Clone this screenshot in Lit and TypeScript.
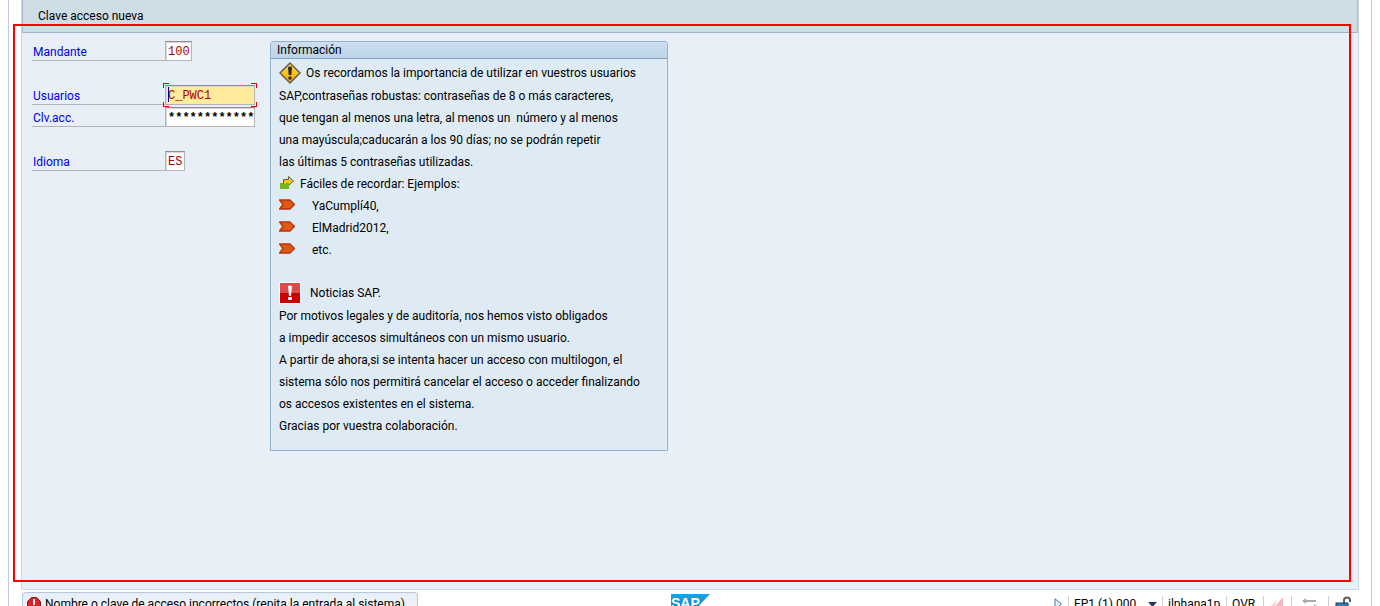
import { LitElement, html, css, nothing } from "lit";
import { customElement } from "lit/decorators.js";

type IconName = "warning" | "transfer" | "bullet" | "alert";

interface InfoLine {
  icon?: IconName;
  text: string;
}

const INFO_LINES: InfoLine[] = [
  { icon: "warning", text: "Os recordamos la importancia de utilizar en vuestros usuarios" },
  { text: "SAP,contraseñas robustas: contraseñas de 8 o más caracteres," },
  { text: "que tengan al menos una letra, al menos un  número y al menos" },
  { text: "una mayúscula;caducarán a los 90 días; no se podrán repetir" },
  { text: "las últimas 5 contraseñas utilizadas." },
  { icon: "transfer", text: "Fáciles de recordar: Ejemplos:" },
  { icon: "bullet", text: "YaCumplí40," },
  { icon: "bullet", text: "ElMadrid2012," },
  { icon: "bullet", text: "etc." },
  { text: "" },
  { icon: "alert", text: "Noticias SAP." },
  { text: "Por motivos legales y de auditoría, nos hemos visto obligados" },
  { text: "a impedir accesos simultáneos con un mismo usuario." },
  { text: "A partir de ahora,si se intenta hacer un acceso con multilogon, el" },
  { text: "sistema sólo nos permitirá cancelar el acceso o acceder finalizando" },
  { text: "os accesos existentes en el sistema." },
  { text: "Gracias por vuestra colaboración." },
];

const ICONS = {
  warning: html`<svg width="22" height="22" viewBox="0 0 22 22" aria-hidden="true">
    <defs>
      <linearGradient id="amber" x1="0" y1="0" x2="0" y2="1">
        <stop offset="0" stop-color="#ffdc55" />
        <stop offset="0.5" stop-color="#fbc21c" />
        <stop offset="1" stop-color="#f5a800" />
      </linearGradient>
    </defs>
    <path d="M11 1 L21 11 L11 21 L1 11 Z" fill="url(#amber)" stroke="#66625a" stroke-width="1.6" stroke-linejoin="round" />
    <path d="M9 5.500 Q9 4.500 11 4.500 Q13 4.500 13 5.500 L12.300 13 H9.700 Z" fill="#2b2b2b" />
    <circle cx="11" cy="16" r="1.8" fill="#2b2b2b" />
  </svg>`,
  transfer: html`<svg width="16" height="16" viewBox="0 0 16 16" aria-hidden="true">
    <path d="M4.5 9.5 V4.5 H9.5 V1.5 L14.5 6 L9.5 10.5 V8.500 H7.500 V9.5 Z" fill="#ffc40d" stroke="#5a5a5a" />
    <path d="M1 8 H4 V9 H8 V8 H10 V14 H1 Z" fill="#76b51b" />
  </svg>`,
  bullet: html`<svg width="16" height="12" viewBox="0 0 16 12" aria-hidden="true">
    <path d="M0.500 1 H11 L15.500 5.500 L11 10 H0.500 L4 5.500 Z" fill="#dd5a14" stroke="#b83212" stroke-width="1.300" stroke-linejoin="round" />
  </svg>`,
  alert: html`<svg width="22" height="22" viewBox="0 0 22 22" aria-hidden="true">
    <rect width="22" height="22" fill="#ffffff" />
    <rect x="1" y="1" width="20" height="20" fill="#cc0000" />
    <rect x="1" y="1" width="20" height="10" fill="#dd4a4a" />
    <path d="M9 4 Q11 3 13 4 L12 14 H10 Z" fill="#ffffff" />
    <rect x="9" y="15" width="4" height="3" rx="1" fill="#ffffff" />
  </svg>`,
};

@customElement("login-info")
class LoginInfo extends LitElement {
  static styles = css`
    :host {
      display: block;
      width: 398px;
    }
    .group {
      box-sizing: border-box;
      border: 1px solid #93b1d0;
      border-radius: 3px 3px 0 0;
      background: #deebf4;
      padding-bottom: 14px;
    }
    .title {
      margin: 0;
      height: 16px;
      line-height: 16px;
      padding-left: 6px;
      border-bottom: 1px solid #7f9fc4;
      background: linear-gradient(#cddff0, #bdd3e8);
      font-size: 12px;
      font-weight: 400;
    }
    .lines {
      margin: 0;
      padding: 3px 0 0 8px;
      list-style: none;
    }
    .line {
      display: flex;
      align-items: center;
      height: 22px;
      white-space: pre;
    }
    .text {
      padding-top: 2px;
    }
    .warning + .text,
    .alert + .text {
      padding-top: 0;
    }
    .warning,
    .alert,
    .transfer,
    .bullet {
      display: flex;
      flex: none;
    }
    .warning {
      width: 27px;
    }
    .alert {
      width: 31px;
    }
    .transfer {
      width: 21px;
    }
    .bullet {
      width: 33px;
    }
  `;

  render() {
    return html`<section class="group">
      <h2 class="title">Información</h2>
      <ul class="lines">
        ${INFO_LINES.map(
          (line) => html`<li class="line">${line.icon ? html`<span class=${line.icon}>${ICONS[line.icon]}</span>` : nothing}<span class="text">${line.text}</span></li>`
        )}
      </ul>
    </section>`;
  }
}

@customElement("status-bar")
class StatusBar extends LitElement {
  static styles = css`
    :host {
      display: block;
      height: 16px;
      flex: none;
    }
    .bar {
      display: grid;
      grid-template-columns: 1fr auto 1fr;
      align-items: start;
      padding: 2px 13px 0 13px;
      height: 22px;
    }
    .message {
      display: flex;
      align-items: center;
      justify-self: start;
      box-sizing: border-box;
      height: 24px;
      gap: 4px;
      padding: 0 12px 0 4px;
      border: 1px solid #b6c7da;
      border-radius: 3px;
      background: linear-gradient(#e6eef6, #f6f9fc);
      white-space: nowrap;
    }
    .logo {
      display: block;
      margin-top: 2px;
    }
    .system {
      display: flex;
      justify-self: end;
      align-items: center;
      height: 24px;
      white-space: nowrap;
    }
    .cell {
      display: flex;
      align-items: center;
      box-sizing: border-box;
      height: 16px;
      padding: 0 5px;
      border-left: 1px solid #cfcfcf;
    }
    .session {
      width: 94px;
    }
    .server {
      width: 64px;
    }
    .mode {
      width: 37px;
    }
    .slot {
      width: 28px;
      padding: 0 7px;
    }
    .wide {
      width: 37px;
      padding: 0 9px;
    }
    .last {
      width: 30px;
      padding: 0 6px;
    }
    .plain {
      display: flex;
      flex: 1;
      align-items: center;
      justify-content: space-between;
      padding: 0;
      border: 0;
      background: none;
      color: inherit;
      font: inherit;
    }
    .expand {
      margin-right: 5px;
    }
  `;

  render() {
    return html`<footer class="bar">
      <div class="message" role="status">
        <svg width="14" height="14" viewBox="0 0 14 14" aria-hidden="true">
          <path d="M4.500 .5 H9.500 L13.500 4.500 V9.500 L9.500 13.500 H4.500 L.5 9.500 V4.500 Z" fill="#d8232a" stroke="#7c1a1e" />
          <path d="M6 2 H8 V8 H6 Z M6 10 H8 V12 H6 Z" fill="#fff" />
        </svg>
        <span>Nombre o clave de acceso incorrectos (repita la entrada al sistema)</span>
      </div>
      <svg class="logo" width="39" height="20" viewBox="0 0 39 20" role="img" aria-label="SAP">
        <defs>
          <linearGradient id="sap" x1="0" y1="0" x2="0" y2="1">
            <stop offset="0" stop-color="#12a8e8" />
            <stop offset="1" stop-color="#1b6fc0" />
          </linearGradient>
        </defs>
        <path d="M0 0 H39 L20 20 H0 Z" fill="url(#sap)" />
        <text x="0" y="14" font-family="Liberation Sans" font-size="14" font-weight="700" fill="#fff">SAP</text>
      </svg>
      <div class="system">
        <button class="plain expand" aria-label="Ampliar">
          <svg width="9" height="12" viewBox="0 0 9 12"><path d="M1 .8 L7.500 6 L1 11.200 Z" fill="#e5f1fa" stroke="#3f7fb0" /></svg>
        </button>
        <div class="cell session">
          <button class="plain">
            FP1 (1) 000
            <svg width="9" height="5" viewBox="0 0 9 5" aria-hidden="true"><path d="M0 0 H9 L4.500 5 Z" fill="#1f3864" /></svg>
          </button>
        </div>
        <div class="cell server">ilphana1p</div>
        <div class="cell mode">OVR</div>
        <div class="cell slot">
          <svg width="12" height="14" viewBox="0 0 12 14" aria-hidden="true">
            <path d="M0 14 L12 0 V14 Z" fill="#f1b9bf" />
            <path d="M0 9 L5 3 V8 L0 14 Z" fill="#f7dadd" />
          </svg>
        </div>
        <div class="cell wide">
          <svg width="18" height="12" viewBox="0 0 18 12" aria-hidden="true">
            <path d="M1 3 L5 0 V2 H15 V4 H5 V6 Z M17 9 L13 6 V8 H5 V10 H13 V12 Z" fill="#a9adb0" />
          </svg>
        </div>
        <div class="cell last">
          <svg width="17" height="17" viewBox="0 0 17 17" aria-hidden="true">
            <path d="M9 8 V4 Q9 1.500 12 1.500 Q15 1.500 15 4 V6" fill="none" stroke="#5d6063" stroke-width="2" />
            <rect x="1" y="7" width="12" height="9" fill="#2a7fb8" stroke="#1c3f5c" />
          </svg>
        </div>
      </div>
    </footer>`;
  }
}

@customElement("app-root")
class AppRoot extends LitElement {
  static styles = css`
    :host {
      display: block;
      position: relative;
      box-sizing: border-box;
      height: 100vh;
      overflow: hidden;
      padding: 0 8px;
      background: #ffffff;
      color: #000000;
      font: 12px/18px Roboto, "Open Sans", sans-serif;
    }
    .window {
      display: flex;
      flex-direction: column;
      box-sizing: border-box;
      height: 100%;
      border: 1px solid #c0ccdc;
      border-width: 0 1px;
    }
    .screen {
      display: flex;
      flex: 1;
      flex-direction: column;
      margin: 0 12px;
      border: 1px solid #cfd9e6;
      border-top: 0;
      background: #e8eff6;
    }
    .toolbar {
      box-sizing: border-box;
      height: 33px;
      padding: 7px 8px;
      border-right: 1px solid #a9b8cc;
      border-bottom: 1px solid #a0b4c8;
      border-left: 1px solid #a9b8cc;
      background: #cfdde7;
    }
    .tool {
      display: block;
      padding: 0 7px;
      border: 0;
      background: none;
      color: inherit;
      font: inherit;
    }
    .content {
      display: flex;
      align-items: flex-start;
      gap: 13px;
      padding: 8px 10px;
    }
    .form {
      display: grid;
      gap: 2px;
      width: 225px;
    }
    .row {
      display: flex;
      height: 20px;
    }
    .spaced {
      margin-top: 22px;
    }
    .label {
      box-sizing: border-box;
      width: 133px;
      padding: 2px 0 0 1px;
      border-bottom: 1px solid #b4b4b4;
      color: #0000f0;
    }
    .field {
      box-sizing: border-box;
      height: 20px;
      margin: 0;
      padding: 2px 0 0 2px;
      border: 1px solid #b4b4b4;
      border-top-color: #8c8c8c;
      border-radius: 0;
      outline: 0;
      background: #ffffff;
      box-shadow: inset 1px 1px 0 #d8d8d8;
      color: #b00000;
      font: 12px/16px "Liberation Mono", monospace;
    }
    .three {
      width: 27px;
    }
    .two {
      width: 20px;
    }
    .long {
      width: 90px;
    }
    .secret {
      color: #000000;
      font-weight: 700;
    }
    .active {
      background: #ffeb9c;
    }
    .focus {
      position: relative;
      display: flex;
    }
    .corners {
      position: absolute;
      inset: -2px;
      pointer-events: none;
    }
    .corner {
      position: absolute;
      width: 5px;
      height: 4px;
      border: 0 solid #e00000;
    }
    .tl {
      top: 0;
      left: 0;
      border-width: 1px 0 0 1px;
    }
    .tr {
      top: 0;
      right: 0;
      border-width: 1px 1px 0 0;
    }
    .bl {
      bottom: 0;
      left: 0;
      border-width: 0 0 1px 1px;
    }
    .br {
      right: 0;
      bottom: 0;
      border-width: 0 1px 1px 0;
    }
    .caret {
      position: absolute;
      top: 2px;
      left: 3px;
      width: 1px;
      height: 15px;
      background: #000080;
    }
    .highlight {
      position: absolute;
      inset: 24px 29px 24px 13px;
      border: 2px solid #ff0000;
      pointer-events: none;
    }
  `;

  render() {
    return html`<div class="window">
        <main class="screen">
          <nav class="toolbar"><button class="tool">Clave acceso nueva</button></nav>
          <div class="content">
            <form class="form">
              <div class="row">
                <label class="label" for="client">Mandante</label>
                <input class="field three" id="client" maxlength="3" value="100" />
              </div>
              <div class="row spaced">
                <label class="label" for="user">Usuarios</label>
                <div class="focus">
                  <input class="field long active" id="user" value="C_PWC1" />
                  <span class="corners">
                    <i class="corner tl"></i><i class="corner tr"></i><i class="corner bl"></i><i class="corner br"></i>
                  </span>
                  <span class="caret"></span>
                </div>
              </div>
              <div class="row">
                <label class="label" for="password">Clv.acc.</label>
                <input class="field long secret" id="password" value="*************" />
              </div>
              <div class="row spaced">
                <label class="label" for="language">Idioma</label>
                <input class="field two" id="language" maxlength="2" value="ES" />
              </div>
            </form>
            <login-info></login-info>
          </div>
        </main>
        <status-bar></status-bar>
      </div>
      <div class="highlight"></div>`;
  }
}
